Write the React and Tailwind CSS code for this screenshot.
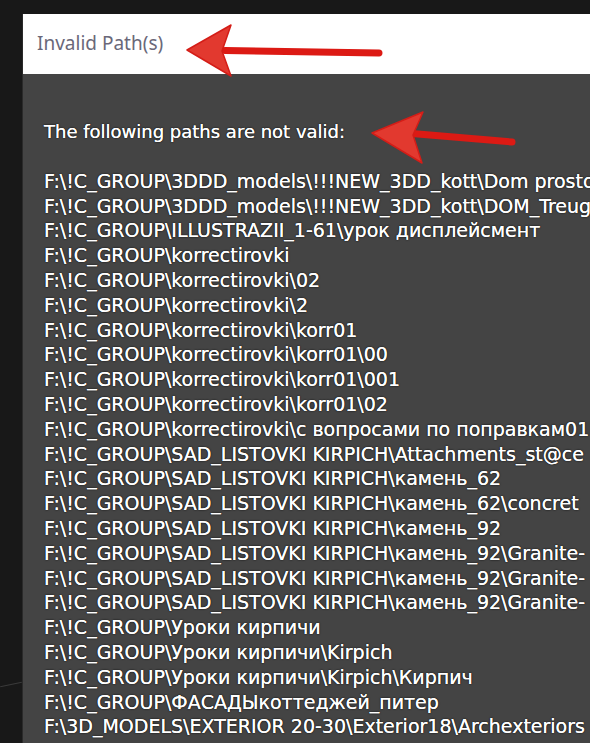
const paths = [
  "F:\\!C_GROUP\\3DDD_models\\!!!NEW_3DD_kott\\Dom prosto",
  "F:\\!C_GROUP\\3DDD_models\\!!!NEW_3DD_kott\\DOM_Treug",
  "F:\\!C_GROUP\\ILLUSTRAZII_1-61\\урок дисплейсмент",
  "F:\\!C_GROUP\\korrectirovki",
  "F:\\!C_GROUP\\korrectirovki\\02",
  "F:\\!C_GROUP\\korrectirovki\\2",
  "F:\\!C_GROUP\\korrectirovki\\korr01",
  "F:\\!C_GROUP\\korrectirovki\\korr01\\00",
  "F:\\!C_GROUP\\korrectirovki\\korr01\\001",
  "F:\\!C_GROUP\\korrectirovki\\korr01\\02",
  "F:\\!C_GROUP\\korrectirovki\\с вопросами по поправкам01",
  "F:\\!C_GROUP\\SAD_LISTOVKI KIRPICH\\Attachments_st@ce",
  "F:\\!C_GROUP\\SAD_LISTOVKI KIRPICH\\камень_62",
  "F:\\!C_GROUP\\SAD_LISTOVKI KIRPICH\\камень_62\\concret",
  "F:\\!C_GROUP\\SAD_LISTOVKI KIRPICH\\камень_92",
  "F:\\!C_GROUP\\SAD_LISTOVKI KIRPICH\\камень_92\\Granite-",
  "F:\\!C_GROUP\\SAD_LISTOVKI KIRPICH\\камень_92\\Granite-",
  "F:\\!C_GROUP\\SAD_LISTOVKI KIRPICH\\камень_92\\Granite-",
  "F:\\!C_GROUP\\Уроки кирпичи",
  "F:\\!C_GROUP\\Уроки кирпичи\\Kirpich",
  "F:\\!C_GROUP\\Уроки кирпичи\\Kirpich\\Кирпич",
  "F:\\!C_GROUP\\ФАСАДЫкоттеджей_питер",
  "F:\\3D_MODELS\\EXTERIOR 20-30\\Exterior18\\Archexteriors",
];

// red annotation arrows, drawn over the screenshot
function TitleArrow() {
  return (
    <svg className="absolute left-[185px] top-[24px] h-[54px] w-[200px]" viewBox="0 0 200 54" fill="none">
      <path d="M40 26.5 L194 29" stroke="#dc1a14" strokeWidth="7" strokeLinecap="round" />
      <path d="M2 26 L46 1 L37 27 L46 52 Z" fill="#e2392f" stroke="#d41d17" strokeWidth="1.5" strokeLinejoin="round" />
    </svg>
  );
}

function BodyArrow() {
  return (
    <svg className="absolute left-[370px] top-[110px] h-[56px] w-[148px]" viewBox="0 0 148 56" fill="none">
      <path d="M42 23.5 L142 32" stroke="#dc1a14" strokeWidth="7" strokeLinecap="round" />
      <path d="M2 23 L53 2 L43 25 L52 53 Z" fill="#e2392f" stroke="#d41d17" strokeWidth="1.5" strokeLinejoin="round" />
    </svg>
  );
}

export default function App() {
  return (
    <div className="relative h-[743px] w-[590px] overflow-hidden bg-[#181818]">
      <div className="ml-[22px] mt-[14px] flex h-[729px] flex-col border-l border-[#2a2a2a]">
        {/* Title bar */}
        <div className="flex h-[60px] items-center bg-white pl-[14px] pb-[2px]">
          <span className="text-[19px] text-[#6a6879] [font-family:'Noto_Sans',sans-serif]">
            Invalid Path(s)
          </span>
        </div>

        {/* Body */}
        <div className="flex-1 overflow-hidden bg-[#444444] pl-[21px] pt-[46px] leading-[24.8px] text-white [font-family:'DejaVu_Sans',sans-serif] [text-shadow:0_0_0.5px_#fff,0_0_2px_#000]">
          <div className="text-[18px]">The following paths are not valid:</div>
          <div className="mt-[24px] flex flex-col whitespace-nowrap text-[19px]">
            {paths.map((p, i) => (
              <div key={i}>{p}</div>
            ))}
          </div>
        </div>
      </div>

      <div className="absolute left-0 top-[684px] h-px w-[22px] -rotate-12 bg-[#3a3a3a]" />

      <TitleArrow />
      <BodyArrow />
    </div>
  );
}
